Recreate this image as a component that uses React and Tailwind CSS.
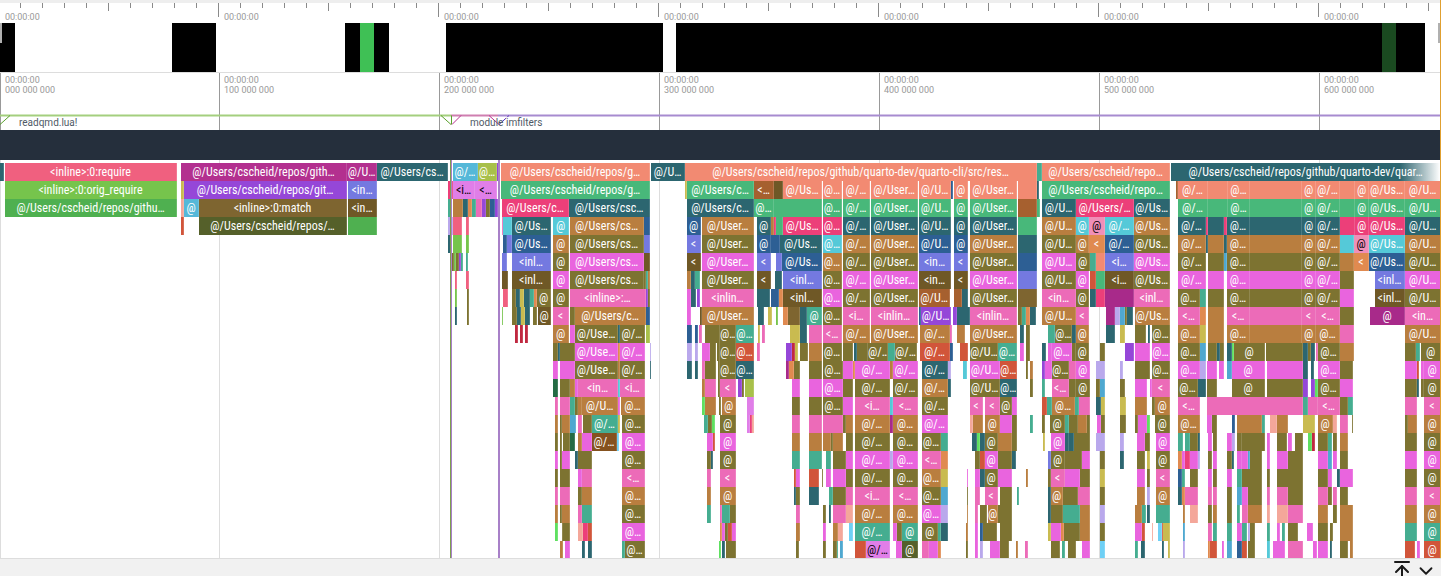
import { ArrowUpToLine, ChevronDown } from 'lucide-react';

const COLORS = {
  sa: 'bg-[#f28a72] text-white',
  te: 'bg-[#2c6670] text-white',
  gr: 'bg-[#48b87a] text-white',
  bl: 'bg-[#2d5f94] text-white',
  pe: 'bg-[#7479e0] text-white',
  cy: 'bg-[#55c9d8] text-white',
  db: 'bg-[#6f5826] text-white',
  ol: 'bg-[#7d7331] text-white',
  br: 'bg-[#b97e3f] text-white',
  ma: 'bg-[#e964de] text-white',
  pk: 'bg-[#ec6bb8] text-white',
  hp: 'bg-[#ec3f79] text-white',
  or: 'bg-[#e08a50] text-white',
  rd: 'bg-[#d1553a] text-white',
  dm: 'bg-[#a82a8a] text-white',
  pu: 'bg-[#9547d8] text-white',
  tg: 'bg-[#45ad90] text-white',
  lv: 'bg-[#b9a8ec] text-white',
  li: 'bg-[#f4a79a] text-white',
  lm: 'bg-[#5fe060] text-white',
  ye: 'bg-[#c9bb50] text-white',
  sb: 'bg-[#4fa8d0] text-white',
  ln: 'bg-[#6fd0f5] text-white',
  cr: 'bg-[#c02840] text-white',
  dg: 'bg-[#246b44] text-white',
  ro: 'bg-[#f0607f] text-white',
  rb: 'bg-[#a6602f] text-white',
  ob: 'bg-[#7e6530] text-white',
  do: 'bg-[#55602a] text-white',
  lg: 'bg-[#76c44c] text-white',
  bg: 'bg-[#4fb050] text-white',
  ad: 'bg-[#b3308f] text-white',
  lb: 'bg-[#55b8d8] text-white',
  la: 'bg-[#a8c04a] text-white',
  kb: 'bg-[#85521f] text-white',
  oc: 'bg-[#e07ee8] text-black',
  lp: 'bg-[#f08fb8] text-black',
  fd: 'bg-gradient-to-r from-[#2c6670] from-[85%] to-white text-white',
  bk: 'bg-black',
  dk: 'bg-[#1a4a20]',
  ng: 'bg-[#3fc055]',
};

const overview = [
  [0, 15, 'bk'], [172, 216, 'bk'], [345, 360, 'bk'], [360, 374, 'ng'], [374, 389, 'bk'],
  [446, 663, 'bk'], [676, 1382, 'bk'], [1382, 1396, 'dk'], [1396, 1425, 'bk'],
];

const rows = [
  [[0, 4, 'te'], [5, 177, 'ro', '<inline>:0:require'], [181, 347, 'ad', '@/Users/cscheid/repos/gith…'], [347, 377, 'ad', '@/U…'], [377, 448, 'te', '@/Users/cs…'], [453, 478, 'lb', '@/…'], [478, 497, 'la', '@…'], [497, 500, 'pu'], [501, 650, 'sa', '@/Users/cscheid/repos/g…'], [651, 685, 'te', '@/U…'], [685, 1037, 'sa', '@/Users/cscheid/repos/github/quarto-dev/quarto-cli/src/res…'], [1037, 1042, 'tg'], [1042, 1170, 'sa', '@/Users/cscheid/repo…'], [1171, 1441, 'fd', '@/Users/cscheid/repos/github/quarto-dev/quar…']],
  [[5, 177, 'lg', '<inline>:0:orig_require'], [181, 184, 'ye'], [184, 347, 'pu', '@/Users/cscheid/repos/git…'], [348, 377, 'pe', '<in…'], [448, 453, 'hp'], [453, 475, 'oc', '<i…'], [475, 497, 'oc', '<…'], [501, 650, 'gr', '@/Users/cscheid/repos/g…'], [685, 687, 'ye'], [687, 754, 'gr', '@/Users/c…'], [754, 774, 'rb', '<…'], [774, 783, 'db'], [783, 822, 'sa', '@/Us…'], [823, 842, 'sa', '@…'], [843, 870, 'sa', '@/…'], [871, 918, 'sa', '@/User…'], [919, 951, 'sa', '@/U…'], [951, 953, 'bl'], [954, 968, 'sa', '@'], [970, 1017, 'sa', '@/User…'], [1018, 1037, 'sa'], [1037, 1039, 'te'], [1042, 1170, 'gr', '@/Users/cscheid/repo…'], [1176, 1178, 'rb'], [1178, 1208, 'sa', '@/…'], [1208, 1228, 'sa'], [1228, 1250, 'sa', '@…'], [1250, 1302, 'sa'], [1302, 1316, 'sa', '@'], [1316, 1340, 'sa', '@/…'], [1340, 1355, 'sa'], [1355, 1369, 'sa', '@'], [1369, 1405, 'sa', '@/Us…'], [1405, 1441, 'sa', '@/U…']],
  [[5, 177, 'bg', '@/Users/cscheid/repos/githu…'], [181, 184, 'li'], [184, 199, 'lb', '@'], [199, 347, 'ob', '<inline>:0:match'], [348, 377, 'db', '<in…'], [448, 451, 'tg'], [453, 463, 'br'], [463, 468, 'te'], [468, 472, 'or'], [472, 476, 'tg'], [476, 482, 'pk'], [482, 486, 'pu'], [486, 490, 'ol'], [490, 495, 'bl'], [495, 498, 'pu'], [502, 569, 'hp', '@/Users/c…'], [569, 650, 'te', '@/Users/csc…'], [687, 754, 'te', '@/Users/c…'], [754, 774, 'gr', '@…'], [774, 822, 'gr'], [823, 842, 'gr', '@…'], [843, 870, 'gr', '@/…'], [871, 918, 'gr', '@/User…'], [919, 951, 'gr', '@/U…'], [954, 968, 'gr', '@'], [970, 1017, 'gr', '@/User…'], [1018, 1037, 'rb'], [1037, 1040, 'gr'], [1042, 1076, 'te', '@/U…'], [1076, 1134, 'hp', '@/Users/…'], [1134, 1170, 'te', '@/Us…'], [1178, 1208, 'gr', '@/…'], [1208, 1228, 'gr'], [1228, 1250, 'gr', '@…'], [1250, 1302, 'gr'], [1302, 1316, 'gr', '@'], [1316, 1340, 'gr', '@/…'], [1340, 1355, 'gr'], [1355, 1369, 'gr', '@'], [1369, 1405, 'gr', '@/Us…'], [1405, 1441, 'gr', '@/U…']],
  [[181, 184, 'rd'], [199, 347, 'do', '@/Users/cscheid/repos/…'], [348, 377, 'bg'], [448, 453, 'lv'], [453, 462, 'ro'], [466, 469, 'ro'], [502, 503, 'pk'], [503, 512, 'cy'], [512, 551, 'te', '@/Us…'], [553, 569, 'cy', '@'], [570, 644, 'br', '@/Users/cs…'], [644, 650, 'bl'], [687, 701, 'bl', '@'], [702, 754, 'br', '@/User…'], [757, 771, 'te', '@'], [771, 774, 'br'], [774, 776, 'hp'], [776, 783, 'gr'], [783, 822, 'hp', '@/Us…'], [823, 842, 'hp', '@…'], [843, 870, 'te', '@/…'], [871, 918, 'te', '@/User…'], [919, 951, 'te', '@/U…'], [954, 968, 'te', '@'], [970, 1017, 'te', '@/User…'], [1018, 1037, 'gr'], [1042, 1076, 'br', '@/U…'], [1076, 1089, 'cy', '@'], [1089, 1105, 'lp', '@'], [1105, 1134, 'cy', '@/…'], [1134, 1170, 'br', '@/Us…'], [1178, 1206, 'te', '@/…'], [1206, 1208, 'hp'], [1208, 1224, 'te'], [1224, 1227, 'hp'], [1227, 1250, 'te', '@…'], [1250, 1302, 'te'], [1302, 1316, 'te', '@'], [1316, 1340, 'te', '@/…'], [1340, 1355, 'hp'], [1355, 1369, 'hp', '@'], [1369, 1405, 'hp', '@/Us…'], [1405, 1441, 'te', '@/U…']],
  [[448, 452, 'te'], [453, 462, 'lg'], [466, 469, 'lg'], [503, 507, 'bl'], [507, 512, 'pe'], [512, 551, 'bl', '@/Us…'], [553, 569, 'br', '@'], [570, 644, 'ol', '@/Users/cs…'], [644, 650, 'pe'], [687, 701, 'pe', '<'], [702, 754, 'ol', '@/User…'], [757, 771, 'bl', '@'], [771, 780, 'bl'], [780, 822, 'te', '@/Us…'], [823, 842, 'cy', '@…'], [843, 870, 'br', '@/…'], [871, 918, 'br', '@/User…'], [919, 951, 'bl', '@/U…'], [954, 968, 'bl', '@'], [970, 1017, 'br', '@/User…'], [1018, 1037, 'te'], [1042, 1076, 'ol', '@/U…'], [1076, 1089, 'br', '@'], [1089, 1105, 'or', '<'], [1105, 1134, 'bl', '@/…'], [1134, 1170, 'ol', '@/Us…'], [1178, 1206, 'br', '@/…'], [1206, 1208, 'te'], [1208, 1224, 'br'], [1224, 1227, 'te'], [1227, 1250, 'br', '@…'], [1250, 1302, 'br'], [1302, 1316, 'br', '@'], [1316, 1340, 'br', '@/…'], [1340, 1354, 'cy'], [1354, 1369, 'lp', '@'], [1369, 1405, 'cy', '@/Us…'], [1405, 1441, 'br', '@/U…']],
  [[452, 454, 'ol'], [454, 456, 'lg'], [456, 459, 'ol'], [459, 461, 'pu'], [461, 463, 'tg'], [466, 468, 'tg'], [502, 507, 'pe'], [512, 551, 'pe', '<inl…'], [553, 569, 'ol', '@'], [570, 644, 'ma', '@/Users/cs…'], [644, 650, 'db'], [687, 701, 'db', '<'], [702, 754, 'ma', '@/User…'], [757, 771, 'pe', '<'], [776, 782, 'pe'], [782, 822, 'bl', '@/Us…'], [823, 842, 'br', '@…'], [843, 870, 'ol', '@/…'], [871, 918, 'ol', '@/User…'], [919, 951, 'pe', '<in…'], [954, 968, 'pe', '<'], [970, 1017, 'ol', '@/User…'], [1018, 1037, 'bl'], [1042, 1076, 'ma', '@/U…'], [1076, 1090, 'ol', '@'], [1090, 1096, 'tg'], [1096, 1105, 'sa'], [1105, 1134, 'pe', '<i…'], [1134, 1170, 'ma', '@/Us…'], [1178, 1206, 'ol', '@/…'], [1208, 1224, 'ol'], [1224, 1227, 'sb'], [1227, 1250, 'ol', '@…'], [1250, 1302, 'ol'], [1302, 1316, 'ol', '@'], [1316, 1340, 'ol', '@/…'], [1340, 1354, 'br'], [1354, 1369, 'or', '<'], [1369, 1405, 'bl', '@/Us…'], [1405, 1441, 'ol', '@/U…']],
  [[455, 457, 'ro'], [466, 469, 'ro'], [502, 508, 'db'], [512, 551, 'db', '<inl…'], [553, 569, 'ma', '@'], [570, 644, 'ol', '@/Users/cs…'], [644, 646, 'ol'], [646, 648, 'tg'], [648, 650, 'br'], [687, 691, 'br'], [691, 695, 'te'], [695, 700, 'tg'], [702, 754, 'ol', '@/User…'], [757, 771, 'db', '<'], [775, 782, 'te'], [783, 822, 'pe', '<inl…'], [823, 842, 'ol', '@…'], [843, 870, 'ma', '@/…'], [871, 918, 'ma', '@/User…'], [919, 951, 'db', '<in…'], [954, 968, 'db', '<'], [970, 1017, 'ma', '@/User…'], [1018, 1037, 'pe'], [1042, 1076, 'ol', '@/U…'], [1076, 1089, 'ma', '@'], [1090, 1096, 'rd'], [1096, 1105, 'gr'], [1105, 1134, 'db', '<i…'], [1134, 1170, 'ol', '@/Us…'], [1178, 1206, 'ma', '@/…'], [1208, 1224, 'ma'], [1227, 1250, 'ma', '@…'], [1250, 1302, 'ma'], [1302, 1316, 'ma', '@'], [1316, 1340, 'ma', '@/…'], [1340, 1354, 'ol'], [1375, 1405, 'pe', '<inl…'], [1405, 1441, 'ma', '@/U…']],
  [[455, 457, 'lg'], [467, 469, 'ol'], [503, 508, 'ro'], [512, 516, 'ol'], [516, 520, 'te'], [520, 524, 'ye'], [524, 530, 'te'], [530, 534, 'tg'], [534, 537, 'or'], [537, 551, 'ol', '@'], [553, 569, 'ol', '@'], [570, 646, 'pk', '<inline>:…'], [646, 648, 'pu'], [648, 650, 'ol'], [687, 691, 'ma'], [691, 696, 'te'], [697, 700, 'pu'], [702, 754, 'pk', '<inlin…'], [757, 770, 'te'], [771, 779, 'bl'], [779, 783, 'or'], [783, 822, 'db', '<inl…'], [823, 842, 'ma', '@…'], [843, 870, 'ol', '@/…'], [871, 918, 'ol', '@/User…'], [919, 950, 'rb', '@/U…'], [954, 962, 'rb'], [962, 968, 'te'], [970, 1017, 'ol', '@/User…'], [1018, 1037, 'ob'], [1042, 1076, 'pk', '<in…'], [1076, 1089, 'ol', '@'], [1090, 1096, 'te'], [1096, 1105, 'hp'], [1105, 1134, 'dm'], [1134, 1170, 'pk', '<inl…'], [1178, 1200, 'ol', '@…'], [1200, 1206, 'tg'], [1208, 1224, 'ol'], [1227, 1250, 'ol', '@…'], [1250, 1302, 'ol'], [1302, 1316, 'ol', '@'], [1316, 1340, 'ol', '@/…'], [1340, 1354, 'ma'], [1375, 1405, 'db', '<inl…'], [1405, 1441, 'ol', '@/U…']],
  [[455, 457, 'te'], [467, 469, 'ol'], [502, 503, 'lg'], [512, 517, 'ol'], [517, 521, 'te'], [521, 525, 'ye'], [525, 530, 'te'], [533, 537, 'ol'], [538, 551, 'db', '@'], [553, 569, 'pk', '<'], [570, 575, 'ol'], [575, 646, 'br', '@/Users/c…'], [646, 650, 'bl'], [687, 691, 'ma'], [700, 702, 'db'], [702, 754, 'br', '@/User…'], [758, 764, 'te'], [768, 772, 'ye'], [776, 778, 'lg'], [783, 788, 'or'], [788, 800, 'ob'], [800, 807, 'te'], [807, 822, 'tg', '@'], [823, 842, 'ol', '@…'], [843, 870, 'pk', '<i…'], [871, 918, 'pk', '<inlin…'], [919, 921, 'bl'], [921, 951, 'pu', '@/U…'], [953, 957, 'pu'], [957, 970, 'te'], [970, 1017, 'pk', '<inlin…'], [1018, 1022, 'ol'], [1022, 1026, 'tg'], [1026, 1030, 'or'], [1030, 1036, 'te'], [1042, 1076, 'br', '@/U…'], [1076, 1089, 'pk', '<'], [1106, 1115, 'dm'], [1115, 1120, 'lv'], [1120, 1125, 'sb'], [1125, 1127, 'ol'], [1127, 1133, 'te'], [1135, 1170, 'br', '@/Us…'], [1178, 1200, 'pk', '<…'], [1200, 1206, 'or'], [1208, 1224, 'br'], [1227, 1250, 'pk', '<…'], [1250, 1302, 'pk'], [1302, 1316, 'pk', '<'], [1316, 1340, 'pk', '<…'], [1340, 1354, 'ol'], [1370, 1405, 'dm', '@'], [1405, 1441, 'pk', '<in…']],
  [[515, 518, 'cr'], [520, 523, 'cr'], [525, 528, 'cr'], [553, 569, 'br', '@'], [570, 575, 'ma'], [575, 618, 'ol', '@/Use…'], [618, 620, 'te'], [620, 645, 'ol', '@/…'], [646, 650, 'la'], [687, 692, 'bl'], [695, 698, 'bl'], [699, 702, 'pk'], [705, 720, 'ol'], [720, 736, 'ol', '@…'], [736, 754, 'tg', '@…'], [758, 760, 'ye'], [762, 765, 'pk'], [790, 800, 'ye'], [800, 807, 'te'], [809, 822, 'pk'], [823, 842, 'pk', '<…'], [843, 870, 'br', '@/…'], [871, 918, 'br', '@/User…'], [920, 950, 'br', '@/…'], [950, 952, 'pk'], [957, 965, 'br'], [970, 1017, 'br', '@/User…'], [1020, 1024, 'te'], [1026, 1030, 'ol'], [1048, 1055, 'tg'], [1055, 1072, 'ol', '@…'], [1072, 1076, 'te'], [1076, 1089, 'br', '@'], [1106, 1115, 'te'], [1120, 1125, 'ye'], [1135, 1146, 'ol'], [1148, 1150, 'te'], [1152, 1170, 'ol', '@…'], [1178, 1200, 'br', '@…'], [1200, 1206, 'ye'], [1208, 1224, 'br'], [1227, 1250, 'br', '@…'], [1250, 1302, 'br'], [1302, 1316, 'br', '@'], [1316, 1340, 'br', '@…'], [1340, 1354, 'pk'], [1405, 1441, 'br', '@/U…']],
  [[553, 558, 'ol'], [558, 560, 'te'], [560, 575, 'ol'], [575, 618, 'ma', '@/Use…'], [618, 620, 'or'], [620, 645, 'ma', '@/…'], [650, 651, 'lv'], [687, 692, 'lv'], [695, 698, 'lv'], [702, 710, 'ma'], [710, 716, 'ol'], [717, 720, 'ol'], [720, 736, 'ol', '@…'], [736, 754, 'rd', '@…'], [757, 760, 'pk'], [786, 792, 'pu'], [792, 795, 'cr'], [795, 798, 'ye'], [800, 808, 'ol'], [809, 822, 'br'], [823, 842, 'ol', '@…'], [843, 853, 'ol'], [854, 857, 'te'], [857, 868, 'ol'], [868, 888, 'ol', '@/…'], [888, 895, 'tg'], [895, 917, 'ol', '@/…'], [920, 950, 'rd', '@/…'], [950, 953, 'bl'], [960, 968, 'rd'], [970, 998, 'ol', '@/U…'], [998, 1017, 'tg', '@…'], [1020, 1024, 'ma'], [1026, 1030, 'ol'], [1042, 1046, 'te'], [1048, 1052, 'ma'], [1052, 1072, 'ma', '@…'], [1072, 1076, 'ol'], [1076, 1089, 'ol', '@'], [1100, 1105, 'ol'], [1125, 1134, 'pu'], [1135, 1150, 'ma'], [1152, 1170, 'ma', '@…'], [1178, 1200, 'ol', '@…'], [1200, 1206, 'sb'], [1208, 1217, 'ol'], [1217, 1220, 'te'], [1220, 1224, 'ol'], [1227, 1232, 'te'], [1232, 1234, 'lm'], [1234, 1265, 'ol', '@'], [1266, 1303, 'ol'], [1303, 1308, 'te'], [1308, 1311, 'ol'], [1311, 1315, 'te'], [1316, 1318, 'pk'], [1318, 1340, 'ol', '@…'], [1340, 1354, 'br'], [1405, 1416, 'ol'], [1416, 1420, 'tg'], [1421, 1441, 'ol', '@']],
  [[553, 558, 'ma'], [560, 575, 'ma'], [575, 618, 'ol', '@/Use…'], [618, 620, 'br'], [620, 645, 'ol', '@/…'], [650, 651, 'te'], [687, 692, 'te'], [695, 698, 'te'], [702, 705, 'pk'], [705, 716, 'ol'], [718, 720, 'ol'], [720, 736, 'ol', '@…'], [736, 754, 'te', '@…'], [786, 789, 'dm'], [789, 794, 'or'], [794, 800, 'ol'], [809, 822, 'ol'], [823, 843, 'ol', '@…'], [843, 853, 'ma'], [853, 855, 'or'], [855, 890, 'ma', '@/…'], [890, 893, 'br'], [893, 918, 'ma', '@/…'], [922, 948, 'te', '@/…'], [948, 951, 'lv'], [963, 967, 'cy'], [970, 1000, 'ma', '@/U…'], [1000, 1017, 'rd', '@…'], [1026, 1028, 'ol'], [1030, 1033, 'br'], [1042, 1045, 'pu'], [1045, 1052, 'ma'], [1052, 1069, 'ol', '@…'], [1069, 1076, 'pk'], [1076, 1090, 'ma', '@'], [1096, 1105, 'lv'], [1120, 1123, 'lv'], [1135, 1150, 'ol'], [1152, 1170, 'ol', '@…'], [1178, 1200, 'ma', '@…'], [1200, 1206, 'lv'], [1207, 1217, 'ma'], [1219, 1224, 'ma'], [1227, 1232, 'sb'], [1232, 1265, 'ma', '@'], [1267, 1303, 'ma'], [1303, 1308, 'te'], [1311, 1314, 'te'], [1318, 1340, 'ma', '@…'], [1340, 1353, 'ol'], [1405, 1417, 'ma'], [1417, 1419, 'rd'], [1421, 1424, 'ma'], [1424, 1441, 'ma', '@']],
  [[553, 558, 'dg'], [560, 570, 'ol'], [570, 575, 'br'], [575, 578, 'ma'], [578, 618, 'pk', '<in…'], [618, 620, 'cy'], [620, 645, 'pk', '<i…'], [702, 705, 'br'], [705, 716, 'pk'], [718, 720, 'ol'], [720, 736, 'pk', '<'], [738, 742, 'pu'], [742, 744, 'ol'], [745, 754, 'la'], [792, 800, 'ma'], [809, 822, 'ma'], [823, 843, 'ma', '@…'], [843, 853, 'ol'], [855, 890, 'ol', '@/…'], [893, 918, 'ol', '@/…'], [922, 948, 'br', '@/…'], [948, 951, 'te'], [970, 1000, 'ol', '@/U…'], [1000, 1017, 'te', '@…'], [1030, 1033, 'ol'], [1042, 1045, 'tg'], [1052, 1069, 'pk', '<…'], [1069, 1076, 'ol'], [1076, 1090, 'ol', '@'], [1096, 1100, 'ol'], [1100, 1105, 'sb'], [1120, 1125, 'ol'], [1135, 1147, 'ma'], [1150, 1152, 'ma'], [1152, 1170, 'pk', '<'], [1178, 1198, 'ol', '@…'], [1198, 1206, 'te'], [1207, 1217, 'ol'], [1232, 1265, 'ol', '@'], [1267, 1303, 'ol'], [1303, 1308, 'pu'], [1311, 1315, 'pu'], [1315, 1318, 'lm'], [1318, 1340, 'ol', '@…'], [1340, 1353, 'ma'], [1405, 1417, 'ol'], [1417, 1419, 'te'], [1421, 1424, 'ol'], [1424, 1441, 'ol', '@']],
  [[555, 558, 'pk'], [560, 570, 'pk'], [570, 575, 'tg'], [575, 578, 'ol'], [578, 582, 'br'], [582, 618, 'br', '@/U…'], [618, 620, 'ma'], [621, 645, 'br', '@…'], [702, 705, 'lm'], [705, 716, 'br'], [719, 721, 'ol'], [722, 736, 'br', '@'], [747, 754, 'oc'], [792, 800, 'ol'], [809, 822, 'ol'], [823, 843, 'ol', '@…'], [843, 853, 'ma'], [855, 890, 'pk', '<i…'], [890, 893, 'cy'], [893, 918, 'pk', '<…'], [922, 948, 'ol', '@/…'], [970, 983, 'pk', '<'], [985, 1000, 'pk', '<'], [1000, 1012, 'ol', '@'], [1012, 1017, 'ma'], [1042, 1047, 'rd'], [1047, 1052, 'tg'], [1052, 1075, 'br', '@…'], [1075, 1079, 'tg'], [1079, 1090, 'pk'], [1096, 1101, 'te'], [1101, 1105, 'ye'], [1120, 1126, 'ye'], [1135, 1147, 'br'], [1152, 1155, 'ol'], [1155, 1170, 'br', '@'], [1178, 1200, 'pk', '<…'], [1207, 1303, 'pk'], [1303, 1308, 'tg'], [1308, 1318, 'pk'], [1318, 1340, 'pk', '<…'], [1340, 1348, 'ol'], [1348, 1353, 'tg'], [1405, 1417, 'pk'], [1424, 1441, 'pk', '<']],
  [[555, 558, 'br'], [560, 562, 'ol'], [562, 570, 'br'], [570, 576, 'sb'], [578, 582, 'pk'], [583, 592, 'ol'], [592, 618, 'tg', '@/…'], [618, 620, 'ye'], [622, 645, 'ol', '@…'], [704, 708, 'tg'], [708, 712, 'ol'], [712, 715, 'lm'], [720, 736, 'ol', '@'], [747, 750, 'oc'], [750, 752, 'hp'], [752, 754, 'li'], [792, 800, 'pk'], [809, 822, 'pk'], [823, 843, 'pk'], [843, 846, 'ol'], [846, 853, 'br'], [855, 890, 'br', '@/…'], [890, 893, 'dm'], [893, 918, 'br', '@…'], [922, 948, 'ma', '@/…'], [970, 973, 'li'], [973, 983, 'br'], [985, 1000, 'br', '@'], [1000, 1012, 'ma'], [1012, 1017, 'ol'], [1030, 1033, 'tg'], [1042, 1045, 'ol'], [1050, 1065, 'ol', '@'], [1065, 1069, 'tg'], [1069, 1078, 'ol'], [1078, 1087, 'br'], [1087, 1090, 'ol'], [1097, 1101, 'ma'], [1101, 1105, 'ol'], [1120, 1126, 'ol'], [1135, 1138, 'ol'], [1138, 1147, 'ma'], [1147, 1150, 'lm'], [1155, 1170, 'ol', '@'], [1178, 1200, 'br', '@…'], [1207, 1212, 'ma'], [1212, 1217, 'ol'], [1232, 1235, 'bl'], [1237, 1262, 'br'], [1262, 1265, 'tg'], [1270, 1277, 'li'], [1277, 1288, 'br'], [1303, 1315, 'ye'], [1318, 1333, 'br', '@'], [1333, 1337, 'li'], [1340, 1348, 'pk'], [1352, 1353, 'ol'], [1405, 1408, 'ol'], [1408, 1417, 'br'], [1424, 1441, 'br', '@']],
  [[555, 558, 'ol'], [560, 562, 'ol'], [563, 570, 'ol'], [570, 575, 'dg'], [578, 582, 'br'], [582, 592, 'ma'], [592, 617, 'kb', '@/…'], [617, 619, 'ln'], [622, 645, 'ma', '@…'], [707, 713, 'ma'], [713, 715, 'rd'], [720, 736, 'ma', '@'], [792, 800, 'br'], [809, 822, 'br'], [823, 831, 'br'], [831, 833, 'ol'], [833, 843, 'br'], [846, 853, 'ol'], [855, 890, 'ol', '@/…'], [893, 918, 'ol', '@…'], [922, 941, 'ol', '@…'], [941, 948, 'tg'], [972, 977, 'te'], [977, 980, 'lm'], [980, 985, 'te'], [985, 998, 'ol', '@'], [998, 1012, 'br'], [1012, 1017, 'ol'], [1043, 1045, 'ye'], [1051, 1065, 'ma', '@'], [1065, 1069, 'te'], [1069, 1074, 'te'], [1074, 1090, 'ol'], [1096, 1105, 'lv'], [1120, 1124, 'lv'], [1137, 1145, 'ma'], [1145, 1150, 'ol'], [1156, 1170, 'ma', '@'], [1178, 1183, 'tg'], [1185, 1190, 'tg'], [1190, 1198, 'ol'], [1198, 1200, 'te'], [1208, 1212, 'ma'], [1213, 1217, 'ol'], [1227, 1232, 'ma'], [1232, 1235, 'lv'], [1237, 1242, 'ol'], [1242, 1265, 'ol'], [1267, 1270, 'ma'], [1277, 1287, 'ol'], [1288, 1292, 'ma'], [1295, 1303, 'ol'], [1308, 1312, 'lm'], [1312, 1315, 'cr'], [1318, 1328, 'ol'], [1328, 1332, 'tg'], [1333, 1337, 'ol'], [1340, 1348, 'br'], [1405, 1417, 'ol'], [1424, 1441, 'ol', '@']],
  [[555, 558, 'ma'], [560, 562, 'ol'], [562, 570, 'ma'], [575, 578, 'te'], [578, 592, 'ol'], [622, 645, 'ol', '@…'], [707, 711, 'ol'], [711, 713, 'te'], [720, 736, 'ol', '@'], [792, 800, 'tg'], [809, 822, 'tg'], [826, 831, 'tg'], [833, 846, 'ol'], [846, 853, 'ma'], [855, 890, 'ma', '@/…'], [890, 893, 'lv'], [893, 918, 'ma', '@…'], [922, 941, 'pk', '<…'], [941, 948, 'or'], [975, 980, 'ol'], [980, 985, 'rd'], [985, 998, 'ma', '@'], [998, 1012, 'ol'], [1012, 1016, 'te'], [1048, 1051, 'pe'], [1051, 1065, 'ol', '@'], [1065, 1082, 'ol'], [1082, 1090, 'ma'], [1100, 1105, 'ol'], [1120, 1124, 'te'], [1137, 1145, 'ol'], [1147, 1150, 'ye'], [1156, 1170, 'ol', '@'], [1178, 1182, 'or'], [1182, 1185, 'ma'], [1185, 1190, 'hp'], [1190, 1198, 'ma'], [1198, 1200, 'lv'], [1208, 1212, 'ol'], [1213, 1217, 'ma'], [1227, 1232, 'ol'], [1232, 1234, 'te'], [1237, 1242, 'ma'], [1242, 1248, 'ma'], [1248, 1250, 'sb'], [1250, 1262, 'ol'], [1267, 1270, 'ma'], [1277, 1288, 'ma'], [1288, 1303, 'ol'], [1318, 1328, 'ma'], [1328, 1332, 'sb'], [1333, 1337, 'ma'], [1340, 1348, 'ol'], [1405, 1417, 'ma'], [1424, 1441, 'ma', '@']],
  [[555, 558, 'ol'], [560, 570, 'ol'], [578, 582, 'ma'], [582, 592, 'pk'], [622, 645, 'pk', '<…'], [707, 711, 'pk'], [720, 736, 'pk', '<'], [794, 796, 'rd'], [796, 800, 'ma'], [809, 819, 'rd'], [822, 823, 'ol'], [826, 831, 'ma'], [833, 846, 'ma'], [846, 853, 'ol'], [855, 890, 'ol', '@/…'], [893, 918, 'ol', '@…'], [922, 941, 'br', '@…'], [941, 948, 'ye'], [967, 968, 'ma'], [975, 980, 'ma'], [980, 985, 'te'], [985, 998, 'ol', '@'], [998, 1012, 'ma'], [1026, 1028, 'br'], [1048, 1051, 'ol'], [1051, 1065, 'pk', '<'], [1065, 1080, 'ma'], [1080, 1090, 'ol'], [1100, 1105, 'ye'], [1137, 1145, 'ma'], [1147, 1150, 'ol'], [1156, 1170, 'pk', '<'], [1178, 1182, 'bl'], [1182, 1185, 'tg'], [1190, 1198, 'ol'], [1208, 1212, 'ma'], [1213, 1217, 'ol'], [1227, 1232, 'ma'], [1237, 1242, 'tg'], [1242, 1262, 'ol'], [1267, 1270, 'ol'], [1277, 1303, 'ol'], [1318, 1328, 'ol'], [1328, 1332, 'ma'], [1337, 1340, 'te'], [1340, 1353, 'ma'], [1405, 1417, 'ol'], [1424, 1441, 'ol', '@']],
  [[555, 558, 'pk'], [560, 570, 'pk'], [578, 582, 'ol'], [582, 592, 'br'], [622, 645, 'br', '@…'], [707, 711, 'br'], [720, 736, 'br', '@'], [794, 796, 'te'], [796, 800, 'ol'], [809, 819, 'te'], [829, 833, 'tg'], [833, 846, 'ol'], [846, 853, 'pk'], [855, 890, 'pk', '<i…'], [893, 918, 'pk', '<…'], [922, 941, 'ol', '@…'], [941, 948, 'sb'], [967, 968, 'ol'], [975, 980, 'pk'], [985, 998, 'pk', '<'], [1000, 1012, 'ol'], [1017, 1019, 'tg'], [1048, 1051, 'te'], [1051, 1063, 'br', '@'], [1063, 1078, 'ol'], [1078, 1090, 'pk'], [1100, 1105, 'ol'], [1137, 1145, 'br'], [1147, 1150, 'lv'], [1156, 1170, 'br', '@'], [1178, 1182, 'te'], [1182, 1185, 'or'], [1185, 1198, 'pk'], [1208, 1212, 'pk'], [1213, 1217, 'pk'], [1227, 1232, 'ol'], [1237, 1242, 'sb'], [1242, 1248, 'ma'], [1248, 1262, 'ol'], [1267, 1270, 'pk'], [1277, 1288, 'pk'], [1288, 1303, 'ol'], [1318, 1328, 'pk'], [1328, 1332, 'ol'], [1333, 1337, 'pk'], [1340, 1348, 'ol'], [1405, 1417, 'pk'], [1424, 1441, 'pk', '<']],
  [[555, 558, 'br'], [560, 562, 'ol'], [562, 570, 'br'], [578, 582, 'pk'], [582, 592, 'tg'], [622, 645, 'ol', '@…'], [707, 711, 'tg'], [720, 722, 'pk'], [722, 730, 'tg'], [730, 736, 'ol'], [796, 800, 'pk'], [823, 826, 'ol'], [829, 831, 'te'], [833, 846, 'pk'], [846, 853, 'li'], [855, 890, 'br', '@/…'], [893, 918, 'br', '@…'], [922, 941, 'ma', '@…'], [941, 948, 'lv'], [967, 968, 'br'], [975, 978, 'pk'], [980, 987, 'ol'], [988, 998, 'br', '@'], [998, 1012, 'ol'], [1048, 1051, 'te'], [1051, 1063, 'ol'], [1063, 1080, 'tg'], [1080, 1090, 'br'], [1100, 1105, 'lv'], [1135, 1142, 'br'], [1142, 1146, 'tg'], [1147, 1150, 'te'], [1156, 1170, 'tg'], [1183, 1185, 'br'], [1190, 1198, 'li'], [1208, 1212, 'ol'], [1213, 1217, 'br'], [1227, 1232, 'ol'], [1237, 1240, 'tg'], [1242, 1248, 'pk'], [1248, 1262, 'br'], [1267, 1270, 'li'], [1277, 1288, 'li'], [1288, 1303, 'pk'], [1318, 1328, 'br'], [1333, 1337, 'ol'], [1340, 1353, 'br'], [1405, 1417, 'br'], [1424, 1441, 'br', '@']],
  [[555, 558, 'lm'], [562, 563, 'ol'], [563, 570, 'ol'], [578, 583, 'li'], [583, 588, 'hp'], [588, 592, 'rd'], [622, 645, 'ma', '@…'], [720, 722, 'or'], [722, 725, 'ma'], [725, 728, 'ol'], [728, 732, 'rd'], [732, 736, 'ma'], [796, 800, 'br'], [823, 826, 'ma'], [833, 838, 'br'], [838, 843, 'li'], [849, 853, 'ln'], [855, 890, 'tg', '@/…'], [893, 897, 'ma'], [897, 902, 'ol'], [902, 918, 'tg', '@'], [922, 938, 'ol', '@'], [938, 941, 'tg'], [941, 948, 'te'], [966, 968, 'br'], [975, 978, 'ma'], [980, 983, 'bl'], [983, 997, 'ol'], [1000, 1012, 'ol'], [1048, 1051, 'ye'], [1051, 1061, 'ma'], [1061, 1064, 'or'], [1064, 1080, 'ol'], [1080, 1090, 'br'], [1100, 1105, 'ol'], [1135, 1142, 'ma'], [1142, 1145, 'rd'], [1152, 1153, 'li'], [1158, 1162, 'ln'], [1162, 1163, 'rd'], [1163, 1170, 'ye'], [1183, 1185, 'sb'], [1208, 1212, 'pk'], [1213, 1217, 'tg'], [1227, 1232, 'tg'], [1237, 1242, 'ma'], [1242, 1247, 'tg'], [1248, 1250, 'lv'], [1250, 1255, 'ol'], [1267, 1270, 'tg'], [1277, 1280, 'ma'], [1282, 1285, 'tg'], [1288, 1298, 'ol'], [1307, 1313, 'ma'], [1318, 1328, 'ol'], [1330, 1333, 'ol'], [1340, 1353, 'br'], [1405, 1417, 'tg'], [1424, 1441, 'tg', '@']],
  [[560, 563, 'br'], [565, 570, 'ma'], [582, 585, 'te'], [588, 592, 'te'], [622, 625, 'tg'], [625, 645, 'ol', '@…'], [719, 721, 'lm'], [722, 725, 'te'], [726, 736, 'ol'], [796, 799, 'ol'], [823, 826, 'ol'], [833, 837, 'ol'], [837, 838, 'tg'], [840, 843, 'sb'], [855, 866, 'rd'], [866, 890, 'oc', '@/…'], [896, 902, 'ma'], [902, 918, 'do', '@'], [922, 929, 'pk'], [929, 938, 'ma'], [938, 941, 'or'], [966, 968, 'ol'], [975, 978, 'ma'], [980, 983, 'lv'], [990, 1000, 'ma'], [1000, 1009, 'ol'], [1016, 1018, 'br'], [1025, 1028, 'pk'], [1051, 1060, 'ol'], [1062, 1065, 'tg'], [1068, 1076, 'ol'], [1082, 1090, 'ma'], [1100, 1105, 'ln'], [1135, 1138, 'tg'], [1141, 1145, 'te'], [1162, 1164, 'te'], [1168, 1170, 'ye'], [1183, 1185, 'lv'], [1208, 1210, 'or'], [1210, 1217, 'rd'], [1222, 1224, 'ma'], [1227, 1232, 'sb'], [1237, 1242, 'bl'], [1242, 1247, 'rd'], [1248, 1255, 'ol'], [1267, 1270, 'cy'], [1273, 1285, 'ma'], [1288, 1303, 'pk'], [1313, 1317, 'ma'], [1318, 1328, 'ma'], [1330, 1332, 'te'], [1340, 1348, 'ol'], [1350, 1353, 'br'], [1405, 1415, 'rd'], [1417, 1420, 'ma'], [1424, 1441, 'rd', '@']],
];

function Span({ span, prevEnd, labelled }) {
  const [from, to, color, label] = span;
  return (
    <div
      className={`shrink-0 h-full overflow-hidden whitespace-nowrap text-center ${COLORS[color]} ${labelled ? 'border-r border-white/15' : ''}`}
      style={{ marginLeft: from - prevEnd, width: to - from }}
    >
      {label}
    </div>
  );
}

function SpanRow({ spans, className, labelled }) {
  return (
    <div className={`flex ${className}`}>
      {spans.map((span, i) => (
        <Span key={i} span={span} prevEnd={i === 0 ? 0 : spans[i - 1][1]} labelled={labelled} />
      ))}
    </div>
  );
}

const offsets = ['000', '100', '200', '300', '400', '500', '600'];

function Ticks() {
  const ticks = [];
  for (let x = 20; x < 1441; x += 22) {
    const step = (x - 108) / 110;
    const mid = Math.round(step) === step;
    const major = mid && Math.round(step) % 2 !== 0;
    ticks.push(<line key={x} x1={x + 0.5} x2={x + 0.5} y1="3" y2={major ? 17 : mid ? 11 : 8} stroke="#8a8a8a" />);
  }
  return (
    <svg className="absolute left-0 top-0" width="1441" height="23">
      {ticks}
    </svg>
  );
}

function AnnotationMarks() {
  return (
    <svg className="absolute left-0 top-0" width="1441" height="16" fill="none">
      <path d="M0 1.5H451" stroke="#a4cf7e" strokeWidth="2" />
      <path d="M451 1.5H498" stroke="#cf7fb0" strokeWidth="2" />
      <path d="M498 1.5H1441" stroke="#a78bd0" strokeWidth="2" />
      <path d="M0 10.5L10 1.5" stroke="#5aa02c" />
      <path d="M441 1.5L451 10.5" stroke="#5aa02c" />
      <path d="M451.5 10.5V1.5" stroke="#5aa02c" />
      <path d="M452 10.5L461 1.5" stroke="#b8308f" />
      <path d="M489 1.5L499 10.5" stroke="#b8308f" />
      <path d="M499 10.5L509 1.5" stroke="#5a30c0" />
    </svg>
  );
}

export default function App() {
  return (
    <div className="relative flex h-[576px] w-[1441px] flex-col overflow-hidden bg-white font-['Roboto',sans-serif]">
      {/* time ruler */}
      <div className="relative h-[23px] shrink-0">
        <div className="h-[3px] bg-[#eeeeee]" />
        <Ticks />
        <div className="relative flex pt-[9px] text-[9px] leading-[10px] text-[#999999]">
          {offsets.map((o) => (
            <div key={o} className="w-[220px] shrink-0 pl-[4px] first:pl-[5px]">00:00:00</div>
          ))}
        </div>
      </div>

      {/* overview */}
      <div className="relative h-[49px] shrink-0">
        <SpanRow spans={overview} className="h-full" />
        <div className="absolute left-0 top-0 h-[20px] w-[2px] bg-[#b0b0b0]" />
        <div className="absolute left-[1438px] top-0 h-[20px] w-[2px] bg-[#b0b0b0]" />
      </div>
      <div className="h-px shrink-0 bg-[#dddddd]" />

      {/* time scale */}
      <div className="flex h-[41px] shrink-0 border-l border-[#999999] text-[9px] leading-[10px] text-[#999999]">
        {offsets.map((o) => (
          <div key={o} className="w-[220px] shrink-0 border-r border-[#999999] pl-[4px] pt-[2px] first:w-[219px] last:border-r-0">
            <div>00:00:00</div>
            <div>{o} 000 000</div>
          </div>
        ))}
      </div>

      {/* annotations */}
      <div className="relative h-[16px] shrink-0 overflow-hidden">
        <div className="flex h-full border-l border-[#999999]">
          {offsets.map((o) => (
            <div key={o} className="w-[220px] shrink-0 border-r border-[#999999] first:w-[219px] last:border-r-0" />
          ))}
        </div>
        <AnnotationMarks />
        <div className="absolute left-[19px] top-[3px] flex h-[10px] items-center bg-white/80 text-[10px] text-[#4f5a66]">readqmd.lua!</div>
        <div className="absolute left-[470px] top-[3px] flex h-[10px] items-center text-[10px] text-[#4f5a66]">module</div>
        <div className="absolute left-[506px] top-[3px] flex h-[10px] items-center bg-white/80 text-[10px] text-[#4f5a66]">imfilters</div>
      </div>

      <div className="h-[30px] shrink-0 bg-[#252f3c]" />

      {/* flame chart */}
      <div className="relative min-h-0 flex-1 overflow-hidden pt-[3px]">
        <div className="absolute inset-0 flex border-l border-[#dddddd]">
          {offsets.map((o) => (
            <div key={o} className="w-[220px] shrink-0 border-r border-[#dddddd] first:w-[219px] last:border-r-0" />
          ))}
        </div>
        <div className="relative text-[12px] leading-[18px] font-stretch-condensed">
          {rows.map((spans, i) => (
            <SpanRow key={i} spans={spans} className="h-[18px]" labelled />
          ))}
        </div>
        <div className="absolute left-[450px] top-0 h-full w-px bg-[#7e9e50]" />
        <div className="absolute left-[451px] top-0 h-full w-px bg-[#a880c8]" />
        <div className="absolute left-[498px] top-0 h-full w-[2px] bg-[#a880c8]" />
      </div>

      {/* bottom bar */}
      <div className="flex h-[18px] shrink-0 justify-end overflow-hidden border-t border-[#dddddd] bg-[#f1f1f1] pr-[4px] text-[#1a1a1a]">
        <ArrowUpToLine size={24} className="shrink-0" />
        <ChevronDown size={22} className="ml-px mt-[1px] shrink-0" />
      </div>

      <div className="absolute right-0 top-0 h-[558px] w-px bg-[#e0a030]" />
    </div>
  );
}
